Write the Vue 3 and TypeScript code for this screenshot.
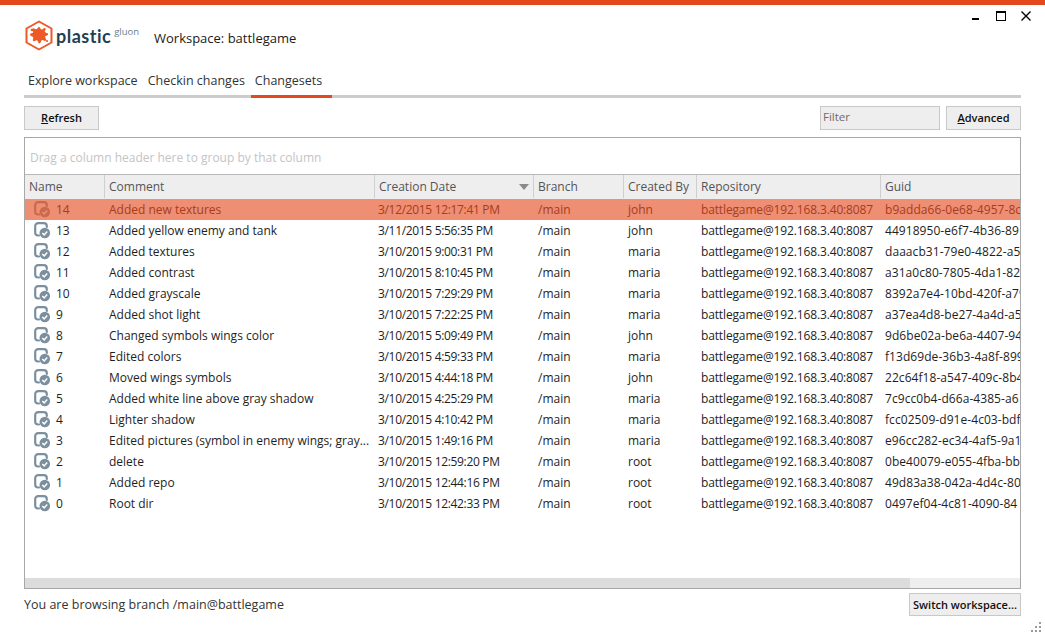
<script setup lang="ts">
interface Row { name: number; comment: string; date: string; by: string; guid: string }
const rows: Row[] = [
  { name: 14, comment: 'Added new textures', date: '3/12/2015 12:17:41 PM', by: 'john', guid: 'b9adda66-0e68-4957-8c' },
  { name: 13, comment: 'Added yellow enemy and tank', date: '3/11/2015 5:56:35 PM', by: 'john', guid: '44918950-e6f7-4b36-89' },
  { name: 12, comment: 'Added textures', date: '3/10/2015 9:00:31 PM', by: 'maria', guid: 'daaacb31-79e0-4822-a5f' },
  { name: 11, comment: 'Added contrast', date: '3/10/2015 8:10:45 PM', by: 'maria', guid: 'a31a0c80-7805-4da1-82c' },
  { name: 10, comment: 'Added grayscale', date: '3/10/2015 7:29:29 PM', by: 'maria', guid: '8392a7e4-10bd-420f-a79' },
  { name: 9, comment: 'Added shot light', date: '3/10/2015 7:22:25 PM', by: 'maria', guid: 'a37ea4d8-be27-4a4d-a5' },
  { name: 8, comment: 'Changed symbols wings color', date: '3/10/2015 5:09:49 PM', by: 'john', guid: '9d6be02a-be6a-4407-94' },
  { name: 7, comment: 'Edited colors', date: '3/10/2015 4:59:33 PM', by: 'maria', guid: 'f13d69de-36b3-4a8f-899' },
  { name: 6, comment: 'Moved wings symbols', date: '3/10/2015 4:44:18 PM', by: 'john', guid: '22c64f18-a547-409c-8b4' },
  { name: 5, comment: 'Added white line above gray shadow', date: '3/10/2015 4:25:29 PM', by: 'maria', guid: '7c9cc0b4-d66a-4385-a6' },
  { name: 4, comment: 'Lighter shadow', date: '3/10/2015 4:10:42 PM', by: 'maria', guid: 'fcc02509-d91e-4c03-bdf' },
  { name: 3, comment: 'Edited pictures (symbol in enemy wings; gray...', date: '3/10/2015 1:49:16 PM', by: 'maria', guid: 'e96cc282-ec34-4af5-9a1' },
  { name: 2, comment: 'delete', date: '3/10/2015 12:59:20 PM', by: 'root', guid: '0be40079-e055-4fba-bb' },
  { name: 1, comment: 'Added repo', date: '3/10/2015 12:44:16 PM', by: 'root', guid: '49d83a38-042a-4d4c-80' },
  { name: 0, comment: 'Root dir', date: '3/10/2015 12:42:33 PM', by: 'root', guid: '0497ef04-4c81-4090-84' },
]
const columns = ['Name', 'Comment', 'Creation Date', 'Branch', 'Created By', 'Repository', 'Guid']
const repo = 'battlegame@192.168.3.40:8087'
</script>

<template>
  <div class="window">
    <div class="accent"></div>
    <div class="win-controls">
      <span class="min"></span>
      <span class="max"></span>
      <svg class="close" width="10" height="10" viewBox="0 0 10 10"><path d="M.5.5l9 9M9.500.5l-9 9" stroke="#000" stroke-width="1.400" fill="none" /></svg>
    </div>
    <header class="head">
      <div class="logo">
        <svg width="28" height="31" viewBox="0 0 28 31">
          <path d="M14 1.500 26.500 8.500v14L14 29.500 1.500 22.500v-14z" fill="#fff" stroke="#ee5a26" stroke-width="2" stroke-linejoin="round" />
          <path d="M14 7c1.300 0 1.400 2.300 2.400 2.600 1.100.3 2.700-2.400 3.900-1.400 1.100 1-.9 2.900-.4 3.900.5 1 3.200.7 3.300 2.200.1 1.400-2.700 1.300-3 2.500-.3 1.100 1.800 2.700.7 3.800-1.100 1.100-2.800-1-3.900-.6-1.100.4-1 3.400-2.500 3.400-1.500 0-1.400-2.700-2.500-3.100-1.100-.4-2.700 1.500-3.800.6-1.100-1 .6-2.600 0-3.700-.6-1.100-3.200-1-3.200-2.500 0-1.500 2.700-1.300 3.100-2.400.4-1.100-1.500-2.700-.6-3.800 1-1.100 2.700 1 3.800.6C12.500 9.700 12.700 7 14 7z" fill="#ee5a26" />
          <circle cx="7" cy="10" r="1.300" fill="#ee5a26" />
          <circle cx="22" cy="21" r="1.100" fill="#ee5a26" />
        </svg>
        <span class="brand">plastic</span><span class="gluon">gluon</span>
      </div>
      <span class="workspace">Workspace: battlegame</span>
    </header>
    <nav class="tabs">
      <span class="tab">Explore workspace</span>
      <span class="tab">Checkin changes</span>
      <span class="tab active">Changesets</span>
    </nav>
    <div class="toolbar">
      <button class="btn refresh"><u>R</u>efresh</button>
      <div class="spacer"></div>
      <div class="filter">Filter</div>
      <button class="btn advanced"><u>A</u>dvanced</button>
    </div>
    <section class="grid">
      <div class="group-panel">Drag a column header here to group by that column</div>
      <div class="body">
        <div class="row header">
          <div v-for="c in columns" :key="c" class="th">
            <span>{{ c }}</span>
            <span v-if="c === 'Creation Date'" class="sort"></span>
          </div>
        </div>
        <div v-for="(r, i) in rows" :key="r.name" class="row item" :class="{ selected: i === 0 }">
          <div class="td name">
            <svg class="cs" width="17" height="17" viewBox="0 0 17 17">
              <path d="M5 13.500H4.200a3 3 0 0 1-3-3V4.200a3 3 0 0 1 3-3h5.600a3 3 0 0 1 3 3V5" fill="none" stroke="currentColor" stroke-width="2.200" stroke-linecap="round" />
              <circle cx="10.800" cy="11" r="5.300" fill="currentColor" />
              <path d="M8.300 11l1.900 1.900 3-3.300" fill="none" stroke="#fff" stroke-width="1.500" class="tick" />
            </svg>
            <span>{{ r.name }}</span>
          </div>
          <div class="td">{{ r.comment }}</div>
          <div class="td date">{{ r.date }}</div>
          <div class="td">/main</div>
          <div class="td">{{ r.by }}</div>
          <div class="td repo">{{ repo }}</div>
          <div class="td guid">{{ r.guid }}</div>
        </div>
      </div>
      <div class="scrollbar"><div class="thumb"></div></div>
    </section>
    <footer class="foot">
      <span class="status">You are browsing branch /main@battlegame</span>
      <button class="btn switch">Switch workspace...</button>
    </footer>
    <div class="grip">
      <i></i><i></i><i></i><i></i><i></i><i></i>
    </div>
  </div>
</template>

<style>
html, body { margin: 0; background: #fff; }
</style>

<style scoped>
.window {
  position: relative;
  width: 1045px;
  height: 636px;
  overflow: hidden;
  background: #fff;
  color: #1e1e1e;
  font: 12px/16px "Open Sans", sans-serif;
  box-sizing: border-box;
}
.accent { height: 5px; background: #e2491d; }
.win-controls { position: absolute; top: 11px; right: 14px; display: flex; align-items: flex-start; }
.min { width: 7px; height: 2px; background: #000; margin-top: 7px; margin-right: 17px; }
.max { width: 10px; height: 10px; border: 1px solid #000; border-top-width: 2px; box-sizing: border-box; margin-right: 15px; }
.close { display: block; }
.head { display: flex; align-items: center; height: 59px; padding: 2px 0 0 25px; box-sizing: border-box; }
.logo { display: flex; align-items: center; width: 129px; height: 32px; }
.brand { font: 700 18px/20px Lato, sans-serif; color: #1f3f52; margin-left: 3px; letter-spacing: .5px; }
.gluon { font-size: 9.500px; line-height: 10px; color: #6b7f8b; align-self: flex-start; margin-top: 7px; margin-left: 3px; }
.workspace { font-size: 13px; color: #1a1a1a; margin-top: 4px; }
.tabs { display: flex; margin: 0 24px; height: 31px; border-bottom: 3px solid #cccccc; }
.tab { padding: 9px 4px 0; margin-right: 2px; font-size: 12.500px; color: #333; }
.tab.active { box-sizing: border-box; height: 34px; padding-right: 10px; margin-bottom: -3px; border-bottom: 3px solid #e2491d; }
.toolbar { display: flex; margin: 8px 24px 0; height: 24px; }
.spacer { flex: 1; }
.btn {
  box-sizing: border-box;
  height: 24px;
  padding: 0;
  border: 1px solid #c8c8c8;
  background: #eeeeee;
  color: #111;
  font: 600 11px/20px "Open Sans", sans-serif;
}
.refresh { width: 75px; }
.advanced { width: 75px; margin-left: 6px; }
.filter {
  box-sizing: border-box;
  width: 120px;
  border: 1px solid #c8c8c8;
  background: #eeeeee;
  padding: 2px;
  font-size: 11.500px;
  color: #76696e;
}
.grid {
  box-sizing: border-box;
  margin: 7px 24px 0;
  height: 452px;
  border: 1px solid #a8a8a8;
  display: flex;
  flex-direction: column;
  overflow: hidden;
}
.group-panel { height: 36px; padding: 12px 5px 0; box-sizing: border-box; color: #c4c4c4; font-size: 12px; white-space: nowrap; }
.body { flex: 1; overflow: hidden; }
.row {
  display: grid;
  grid-template-columns: 80px 270px 159px 90px 73px 184px 200px;
  width: 1056px;
}
.header { height: 25px; background: #eeeeee; border-top: 1px solid #b8b8b8; padding-bottom: 1px; box-sizing: border-box; }
.th {
  display: flex;
  align-items: center;
  justify-content: space-between;
  padding: 0 6px 0 4px;
  border-right: 1px solid #cfcfcf;
  color: #555;
  font-size: 12px;
}
.th:last-child { border-right: none; }
.sort { border: 5px solid transparent; border-top: 6px solid #8a8a8a; border-bottom: 0; margin-right: -2px; }
.item { height: 21px; align-items: center; color: #1e1e1e; }
.td { padding: 0 4px; white-space: nowrap; overflow: hidden; font-size: 12px; line-height: 21px; height: 21px; }
.date { letter-spacing: -.33px; padding-left: 3px; }
.repo { letter-spacing: -.14px; }
.guid { letter-spacing: .06px; }
.name { display: flex; align-items: center; gap: 5px; padding-left: 9px; }
.cs { color: #7b8f9f; flex: none; margin-top: -1px; }
.selected { background: #ee8e72; color: #a83c1d; }
.selected .cs { color: #c96a4c; }
.selected .tick { stroke: #ee8e72; }
.scrollbar { height: 10px; background: #eeeeee; flex: none; }
.thumb { width: 885px; height: 100%; background: #dcdcdc; }
.foot { display: flex; align-items: flex-start; justify-content: space-between; margin: 4px 24px 0; height: 24px; }
.status { font-size: 12.500px; color: #333; line-height: 24px; }
.switch { width: 112px; height: 23px; }
.grip { position: absolute; right: 3px; bottom: 3px; width: 11px; height: 11px; display: grid; grid-template-columns: repeat(3, 2px); grid-template-rows: repeat(3, 2px); gap: 2px; }
.grip i { background: #9a9a9a; }
.grip i:nth-child(1) { grid-area: 1 / 3; }
.grip i:nth-child(2) { grid-area: 2 / 2; }
.grip i:nth-child(3) { grid-area: 2 / 3; }
.grip i:nth-child(4) { grid-area: 3 / 1; }
.grip i:nth-child(5) { grid-area: 3 / 2; }
.grip i:nth-child(6) { grid-area: 3 / 3; }
</style>
